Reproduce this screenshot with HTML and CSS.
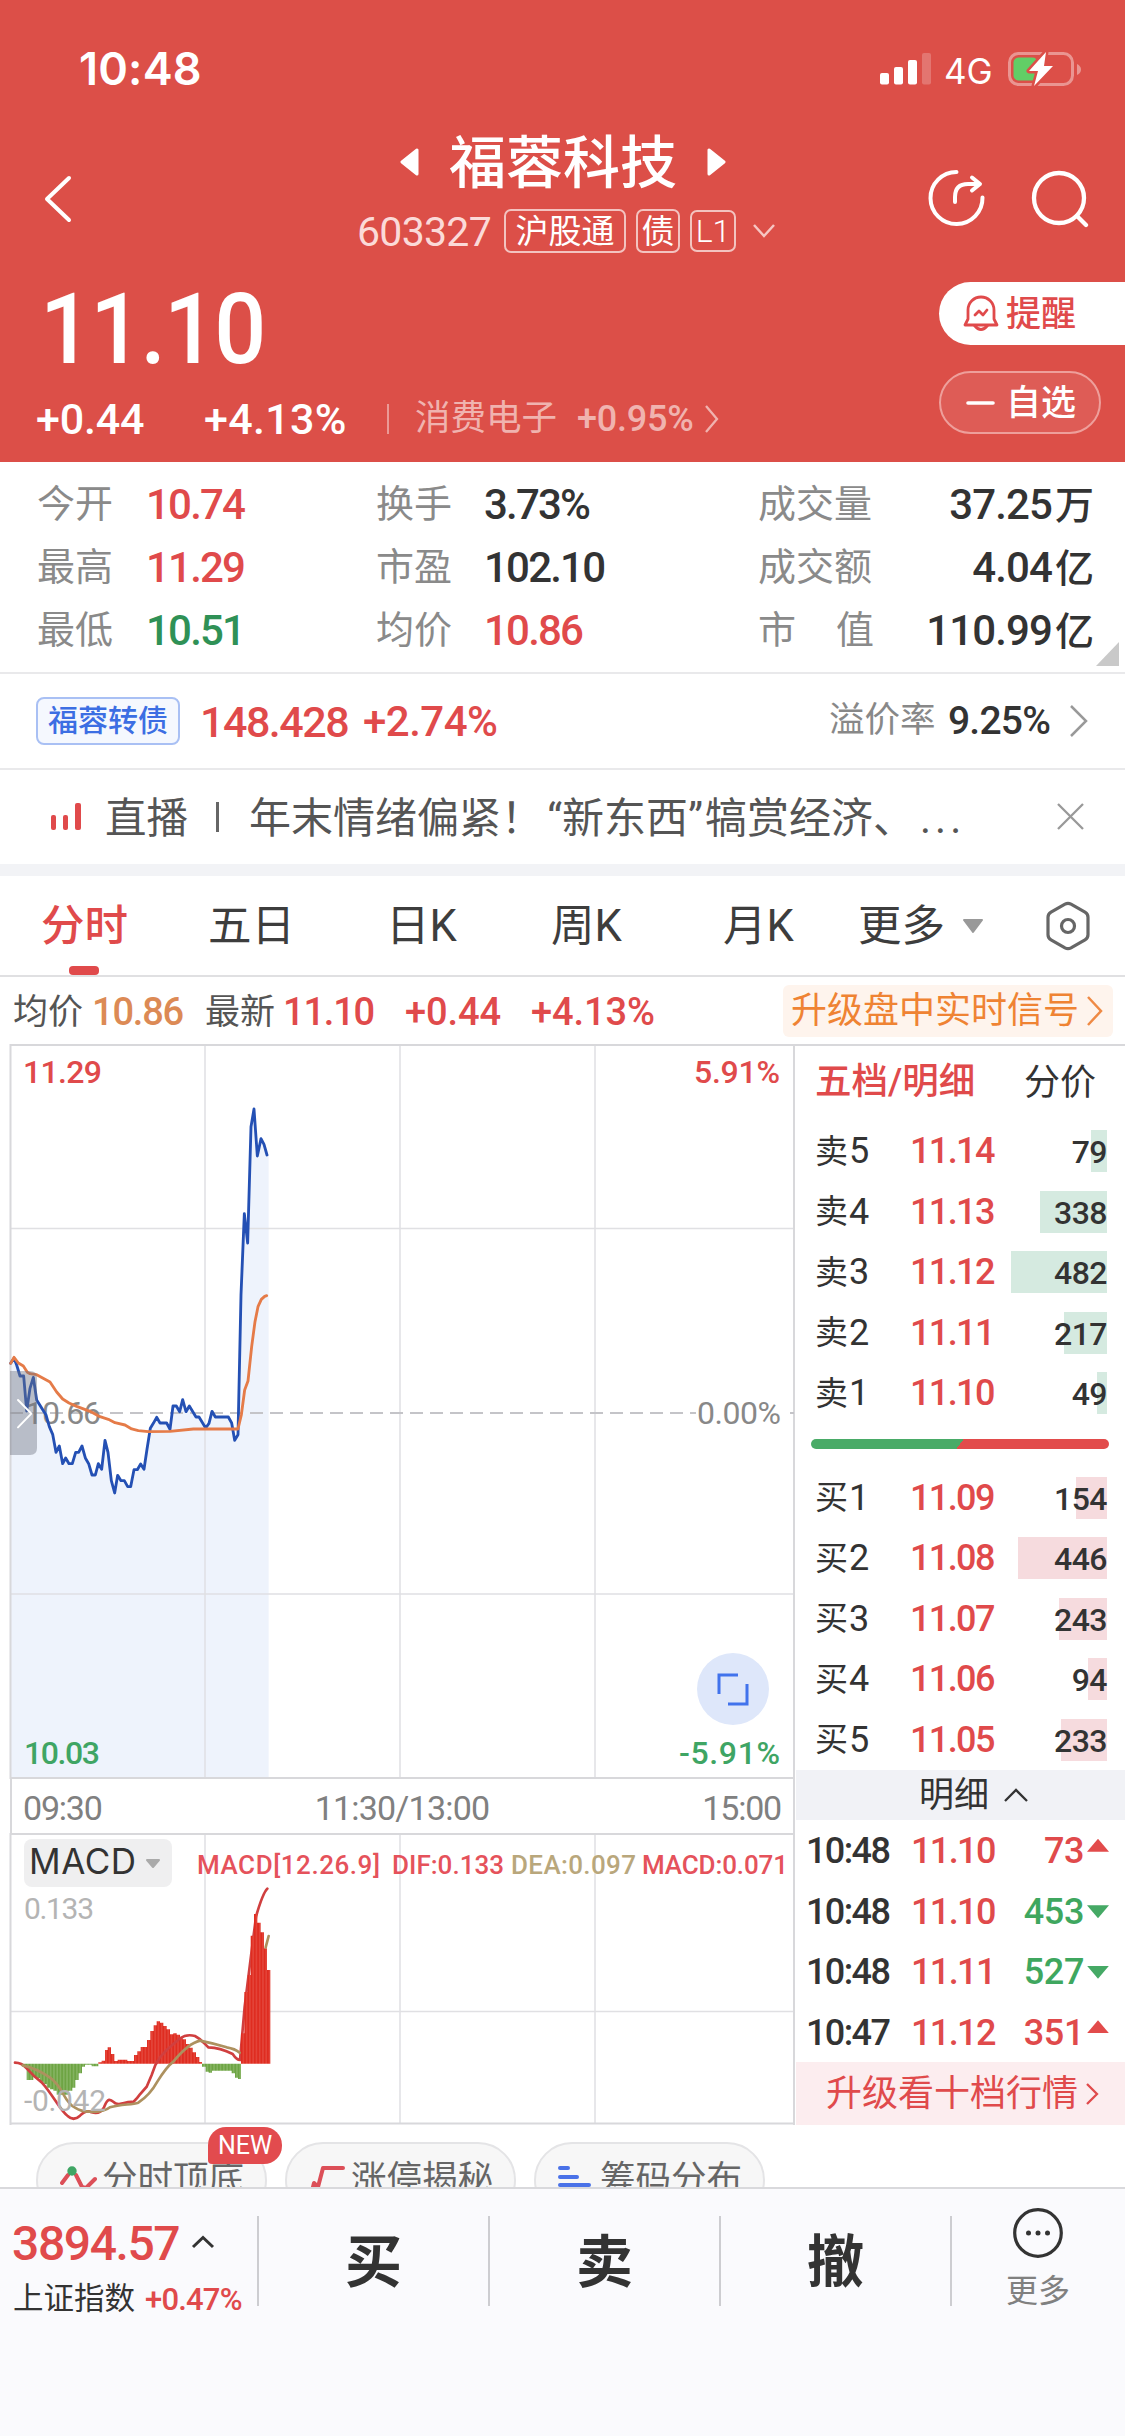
FILE: index.html
```html
<!DOCTYPE html>
<html lang="zh-CN">
<head>
<meta charset="utf-8">
<title>福蓉科技 603327</title>
<link rel="stylesheet" href="styles.css">
</head>
<body>
<div class="screen">
  <header class="header">
    <div class="status">
      <span class="clock">10:48</span>
      <div class="status-right">
        <svg class="signal" width="52" height="34" viewBox="0 0 52 34"><g fill="#fff"><rect x="0" y="21" width="9" height="11.500" rx="2"/><rect x="14" y="15" width="9" height="17.500" rx="2"/><rect x="28" y="8" width="9" height="24.500" rx="2"/><rect x="42" y="1" width="9" height="31.500" rx="2" opacity=".22"/></g></svg>
        <span class="net">4G</span>
        <svg class="battery" width="76" height="38" viewBox="0 0 76 38"><rect x="1.500" y="3.500" width="63" height="31" rx="9" fill="none" stroke="#fff" stroke-opacity=".4" stroke-width="3"/><path d="M69 14v11q4-2 4-5.500T69 14z" fill="#fff" opacity=".4"/><rect x="5.500" y="7.500" width="24" height="23" rx="5" fill="#62ce66"/><path d="M38 2L21 21h9l-4 15 19-20h-9z" fill="#fff" stroke="#dc4f48" stroke-width="5" stroke-linejoin="round" paint-order="stroke"/></svg>
      </div>
    </div>
    <div class="nav">
      <svg class="back" width="30" height="50" viewBox="0 0 30 50"><path d="M26 4L4 25l22 21" fill="none" stroke="#fff" stroke-width="4" stroke-linecap="round" stroke-linejoin="round"/></svg>
      <div class="nav-mid">
        <div class="title-row">
          <svg width="20" height="28" viewBox="0 0 20 28"><path d="M17 2v24L2 14z" fill="#fff" stroke="#fff" stroke-width="3" stroke-linejoin="round"/></svg>
          <h1>福蓉科技</h1>
          <svg width="20" height="28" viewBox="0 0 20 28"><path d="M3 2v24l15-12z" fill="#fff" stroke="#fff" stroke-width="3" stroke-linejoin="round"/></svg>
        </div>
        <div class="code-row">
          <span class="code">603327</span>
          <span class="tag tag-wide">沪股通</span>
          <span class="tag">债</span>
          <span class="tag tag-l1">L1</span>
          <svg class="code-arrow" width="24" height="18" viewBox="0 0 24 18"><path d="M2 3l10 11L22 3" fill="none" stroke="#f6c6c3" stroke-width="2.500"/></svg>
        </div>
      </div>
      <div class="nav-icons">
        <svg width="58" height="58" viewBox="0 0 58 58"><g fill="none" stroke="#fff" stroke-width="4" stroke-linecap="round" stroke-linejoin="round"><path d="M28.500 3A26 26 0 1 0 54.500 28.500"/><path d="M27 33V28Q27 15 40 15H50M44 8.500l8 6.500-8 6.500"/></g></svg>
        <svg width="58" height="60" viewBox="0 0 58 60"><g fill="none" stroke="#fff" stroke-width="4.300" stroke-linecap="round"><circle cx="28" cy="29" r="25"/><path d="M46 47l9 9"/></g></svg>
      </div>
    </div>
    <div class="quote">
      <div class="quote-left">
        <div class="price">11.10</div>
        <div class="change">
          <span class="chg">+0.44</span><span class="chg pct">+4.13%</span><i class="vbar"></i><span class="sector">消费电子</span><span class="sector-pct">+0.95%</span>
          <svg width="16" height="30" viewBox="0 0 16 30"><path d="M2 2l11 13L2 28" fill="none" stroke="#f0b3af" stroke-width="2.300"/></svg>
        </div>
      </div>
      <div class="quote-btns">
        <button class="btn-alert">
          <svg width="36" height="38" viewBox="0 0 36 38"><g fill="none" stroke="#e04a4b" stroke-width="2.800" stroke-linecap="round" stroke-linejoin="round"><path d="M5 24V15a13 13 0 0 1 26 0v9l3 6H2z"/><path d="M11.500 30.500q6.500 8 13 0"/><path d="M12 20l4-4 4 4 4-5"/></g></svg>
          <span>提醒</span>
        </button>
        <button class="btn-fav">
          <svg width="30" height="6" viewBox="0 0 30 6"><path d="M2 3h25" stroke="#fff" stroke-width="3.600" stroke-linecap="round"/></svg>
          <span>自选</span>
        </button>
      </div>
    </div>
  </header>

  <section class="stats">
    <span class="lb">今开</span><b class="red">10.74</b><span class="lb">换手</span><b>3.73%</b><span class="lb">成交量</span><b class="r">37.25<em>万</em></b>
    <span class="lb">最高</span><b class="red">11.29</b><span class="lb">市盈</span><b>102.10</b><span class="lb">成交额</span><b class="r">4.04<em>亿</em></b>
    <span class="lb">最低</span><b class="green">10.51</b><span class="lb">均价</span><b class="red">10.86</b><span class="lb spread"><i>市</i><i>值</i></span><b class="r">110.99<em>亿</em></b>
    <i class="corner"></i>
  </section>

  <section class="bond">
    <span class="bond-tag">福蓉转债</span><b class="red bond-price">148.428</b><b class="red bond-pct">+2.74%</b>
    <span class="prem">溢价率</span><b class="prem-v">9.25%</b>
    <svg width="20" height="36" viewBox="0 0 20 36"><path d="M2 3l15 15L2 33" fill="none" stroke="#999" stroke-width="2.500"/></svg>
  </section>

  <section class="live">
    <svg width="32" height="30" viewBox="0 0 32 30"><g fill="#e04a4b"><rect x="0" y="13" width="5" height="15" rx="2"/><rect x="12" y="13" width="5" height="15" rx="2"/><rect x="24" y="1" width="6" height="27" rx="2"/></g></svg>
    <span class="live-k">直播</span><i class="live-sep"></i>
    <span class="live-t">年末情绪偏紧！<q class="ql">“</q>新东西<q class="qr">”</q>犒赏经济、<q class="dots">...</q></span>
    <svg class="live-x" width="28" height="28" viewBox="0 0 28 28"><path d="M1 1l25 25M26 1L1 26" stroke="#999" stroke-width="2.300"/></svg>
  </section>

  <nav class="tabs">
    <span class="tab on">分时</span><span class="tab">五日</span><span class="tab">日K</span><span class="tab">周K</span><span class="tab">月K</span><span class="tab">更多</span>
    <svg class="tri" width="22" height="16" viewBox="0 0 22 16"><path d="M2 2h18l-9 12z" fill="#999" stroke="#999" stroke-width="2" stroke-linejoin="round"/></svg>
    <svg class="hex" width="46" height="50" viewBox="0 0 46 50"><g fill="none" stroke="#666" stroke-width="3.200"><path d="M20 3.200q3-1.600 6 0l14 8q3 1.800 3 5v17.600q0 3.200-3 5l-14 8q-3 1.600-6 0l-14-8q-3-1.800-3-5V16.200q0-3.200 3-5z"/><circle cx="23" cy="25" r="6.500"/></g></svg>
  </nav>

  <section class="info">
    <span class="k">均价</span><b class="orange">10.86</b><span class="k">最新</span><b class="red">11.10</b><b class="red wide">+0.44</b><b class="red wide">+4.13%</b>
    <span class="signal-ad"><span>升级盘中实时信号</span><svg width="18" height="32" viewBox="0 0 18 32"><path d="M2 2l13 14L2 30" fill="none" stroke="#ef8a45" stroke-width="2.500"/></svg></span>
  </section>

  <main class="board">
    <div class="charts">
      <svg class="chart" width="795" height="735" viewBox="0 0 795 735">
        <path transform="translate(0 -4) scale(.33333)" fill="#eef3fc" d="M30 970L42 955 50 975 60 1008H71L80 1113 90 1045 100 1012 110 1080 138 1125 148 1160 158 1183 168 1237 178 1218 188 1271 197 1254 207 1271H217L227 1237H236L246 1218 256 1254 266 1271 276 1305H286L295 1271 305 1288 315 1201 324 1237 334 1322 344 1359 353 1306 363 1322H373L383 1340H392L402 1289H412L422 1272 432 1288 441 1228 451 1165 460 1150 470 1132 480 1149H500L510 1168 519 1098H529L539 1115 548 1079 558 1115 568 1098 588 1131H597L617 1164 627 1150 636 1114 646 1131H685L695 1149 704 1201 714 1184 723 765 733 521 743 609 753 260 762 207 772 348 783 296 792 313 801 345H806V2214H30z"/>
        <g stroke="#e0e0e3" stroke-width="1.500" fill="none"><path d="M205 0V734M400 0V734M595 0V734M10 184.500H794M10 550H794"/></g>
        <path d="M10 1H795M10.500 0V735M794 0V735M10 734H795" stroke="#d8d8db" stroke-width="2" fill="none"/>
        <path d="M10 369H794" stroke="#c4c4c8" stroke-width="1.800" stroke-dasharray="13 7"/>
        <text x="25" y="380" class="mut" textLength="76">10.66</text>
        <rect x="696" y="358" width="88" height="24" fill="#fff"/>
        <text x="697" y="380" class="mut" textLength="84">0.00%</text>
        <g transform="translate(0 -4) scale(.33333)" fill="none" stroke-linejoin="round" stroke-linecap="round" stroke-width="8.500">
          <path stroke="#2450b4" d="M32 970L42 955 50 975 60 1008H71L80 1113 90 1045 100 1012 110 1080 138 1125 148 1160 158 1183 168 1237 178 1218 188 1271 197 1254 207 1271H217L227 1237H236L246 1218 256 1254 266 1271 276 1305H286L295 1271 305 1288 315 1201 324 1237 334 1322 344 1359 353 1306 363 1322H373L383 1340H392L402 1289H412L422 1272 432 1288 441 1228 451 1165 460 1150 470 1132 480 1149H500L510 1168 519 1098H529L539 1115 548 1079 558 1115 568 1098 588 1131H597L617 1164 627 1150 636 1114 646 1131H685L695 1149 704 1201 714 1184 723 765 733 521 743 609 753 260 762 207 772 348 783 296 792 313 801 345"/>
          <path stroke="#e57b48" d="M32 970L42 952 55 969 70 978 82 997 90 1001 110 1004 128 1014 150 1026 170 1056 188 1077 207 1089 230 1099 270 1114 300 1130 325 1138 345 1148 375 1155 395 1167 415 1172 445 1175 510 1174 580 1167H714L724 1125 734 1050 744 1023 755 920 765 845 774 800 784 778 794 769 800 767"/>
          <path d="M30 993H90Q111 993 111 1014V1224Q111 1245 90 1245H30z" fill="#6e7380" fill-opacity=".42" stroke="none"/>
          <path d="M54 1080L94 1121 54 1162" stroke="#fff" stroke-width="6"/>
        </g>
        <text x="23" y="39" class="c-red" textLength="79">11.29</text>
        <text x="694" y="39" class="c-red" textLength="86">5.91%</text>
        <text x="24" y="720" class="c-green" textLength="76">10.03</text>
        <text x="679" y="720" class="c-green" textLength="101">-5.91%</text>
        <circle cx="733" cy="645" r="36" fill="#dee7fa"/>
        <path d="M719 650V631H738M747 640V660H728" fill="none" stroke="#4173ec" stroke-width="3"/>
      </svg>
      <div class="axis"><span>09:30</span><span>11:30/13:00</span><span>15:00</span></div>
      <svg class="chart" width="795" height="292" viewBox="0 0 795 292">
        <defs>
          <pattern id="pr" width="9.800" height="20" patternUnits="userSpaceOnUse"><rect width="9.800" height="20" fill="#df2c20"/><rect x="4" width="1.800" height="20" fill="#ea6a60"/></pattern>
          <pattern id="pg" width="9.800" height="20" patternUnits="userSpaceOnUse"><rect width="9.800" height="20" fill="#6da443"/><rect x="4" width="2" height="20" fill="#a4c888"/></pattern>
        </defs>
        <g stroke="#e0e0e3" stroke-width="1.500"><path d="M205 0V291M400 0V291M595 0V291M10 178.500H794"/></g>
        <path d="M10 1H795M10.500 0V292M794 0V292M10 290.500H795" stroke="#d8d8db" stroke-width="2" fill="none"/>
        <text x="24" y="86" class="m-lab" textLength="70">0.133</text>
        <g transform="translate(0 -13) scale(.33333)">
          <path fill="url(#pg)" d="M62 731V735H72V742H80V780H100V770H110V775H120V785H130V792H140V803H150V808H160V812H170V824H205V812H217V803H226V780H236V760H246V740H255V734H275V739H295V731z"/>
          <path fill="url(#pr)" d="M295 731V727H305V722H315V690H323V682H333V702H343V723H353V719H382V723H402V705H412V694H422V681H441V660H451V633H461V616H470V604H480V608H490V618H500V628H510V643H520V640H530V644H540V652H548V658H558V672H568V683H578V697H588V711H598V726H606V731z"/>
          <path fill="url(#pg)" d="M606 731V740H617V755H626V758H636V752H695V760H705V773H714V777H723V731z"/>
          <g fill="none" stroke-width="8" stroke-linecap="round">
            <path stroke="#d03f3f" d="M45 728Q65 728 80 745Q100 768 125 787C160 825 180 872 203 888Q221 905 240 887Q258 868 275 877 Q300 884 312 862C325 828 333 840 346 850C365 858 375 843 400 846Q412 835 420 823L440 800 455 765 466 735 480 712 500 690 540 655Q560 641 585 648C605 658 612 670 625 682Q660 683 698 702Q710 720 720 720L734 560 754 400 768 290Q788 220 802 206"/>
          </g>
          <path fill="url(#pr)" d="M723 731V640H733V516H743V465H752V347H762V282H772V308H782V337H792V385H801V450H811V731z"/>
          <g fill="none" stroke-width="8" stroke-linecap="round"><path stroke="#ad915f" d="M68 736Q110 745 150 773C190 800 190 845 225 863Q245 876 270 875Q310 878 330 862C365 852 395 855 415 848Q450 825 472 785Q500 740 520 725Q565 670 600 662Q640 670 680 682 Q705 686 719 698M797 382L806 348"/></g>
        </g>
        <text x="24" y="278" class="m-lab" textLength="82">-0.042</text>
        <rect x="24" y="6" width="148" height="48" rx="8" fill="#efeff0"/>
        <text x="29" y="41" class="m-name" textLength="107">MACD</text>
        <path d="M147 27h12l-6 7z" fill="#aaa" stroke="#aaa" stroke-width="2" stroke-linejoin="round"/>
        <text x="197" y="41" class="m-val c1" textLength="183">MACD[12.26.9]</text>
        <text x="392" y="41" class="m-val c1" textLength="112">DIF:0.133</text>
        <text x="511" y="41" class="m-val c2" textLength="125">DEA:0.097</text>
        <text x="642" y="41" class="m-val c1" textLength="146">MACD:0.071</text>
      </svg>
    </div>

    <aside class="book">
      <div class="book-head"><b>五档/明细</b><span>分价</span></div>
      <div class="lv"><span>卖<i>5</i></span><b>11.14</b><em><u class="g" style="width:16px"></u>79</em></div>
      <div class="lv"><span>卖<i>4</i></span><b>11.13</b><em><u class="g" style="width:67px"></u>338</em></div>
      <div class="lv"><span>卖<i>3</i></span><b>11.12</b><em><u class="g" style="width:96px"></u>482</em></div>
      <div class="lv"><span>卖<i>2</i></span><b>11.11</b><em><u class="g" style="width:43px"></u>217</em></div>
      <div class="lv"><span>卖<i>1</i></span><b>11.10</b><em><u class="g" style="width:10px"></u>49</em></div>
      <div class="ratio"></div>
      <div class="lv"><span>买<i>1</i></span><b>11.09</b><em><u class="p" style="width:31px"></u>154</em></div>
      <div class="lv"><span>买<i>2</i></span><b>11.08</b><em><u class="p" style="width:89px"></u>446</em></div>
      <div class="lv"><span>买<i>3</i></span><b>11.07</b><em><u class="p" style="width:48px"></u>243</em></div>
      <div class="lv"><span>买<i>4</i></span><b>11.06</b><em><u class="p" style="width:19px"></u>94</em></div>
      <div class="lv"><span>买<i>5</i></span><b>11.05</b><em><u class="p" style="width:46px"></u>233</em></div>
      <div class="detail"><span>明细</span><svg width="26" height="16" viewBox="0 0 26 16"><path d="M2 14L13 3l11 11" fill="none" stroke="#333" stroke-width="2.300"/></svg></div>
      <div class="tick"><span>10:48</span><b>11.10</b><em class="red">73</em><i class="up"></i></div>
      <div class="tick"><span>10:48</span><b>11.10</b><em class="grn">453</em><i class="dn"></i></div>
      <div class="tick"><span>10:48</span><b>11.11</b><em class="grn">527</em><i class="dn"></i></div>
      <div class="tick"><span>10:47</span><b>11.12</b><em class="red">351</em><i class="up"></i></div>
      <div class="upsell"><span>升级看十档行情</span><svg width="15" height="24" viewBox="0 0 15 24"><path d="M2 2l10 10L2 22" fill="none" stroke="#e04a4b" stroke-width="2.300"/></svg></div>
    </aside>
  </main>

  <div class="chips">
    <div class="chip"><svg width="38" height="36" viewBox="0 0 38 36"><g fill="none" stroke="#dc4f58" stroke-width="4" stroke-linecap="round"><path d="M3 18l6-8M17 10l6 12 4 1 9-9"/></g><circle cx="13" cy="6" r="4.700" fill="#3fa564"/></svg><span>分时顶底</span><i class="new">NEW</i></div>
    <div class="chip"><svg width="38" height="36" viewBox="0 0 38 36"><path d="M4 26l2-8 4 4 5-19h20" fill="none" stroke="#dc4f58" stroke-width="4" stroke-linejoin="round" stroke-linecap="round"/></svg><span>涨停揭秘</span></div>
    <div class="chip"><svg width="38" height="36" viewBox="0 0 38 36"><path d="M3 3h8M3 12h17M3 20h29" fill="none" stroke="#4a72e8" stroke-width="4" stroke-linecap="round"/></svg><span>筹码分布</span></div>
  </div>

  <footer class="bar">
    <div class="index">
      <div class="idx-top"><b>3894.57</b><svg width="24" height="14" viewBox="0 0 24 14"><path d="M2 12L12 2.500 22 12" fill="none" stroke="#333" stroke-width="3"/></svg></div>
      <div class="idx-bot"><span>上证指数</span><b>+0.47%</b></div>
    </div>
    <div class="act">买</div><div class="act">卖</div><div class="act">撤</div>
    <div class="more"><svg width="50" height="50" viewBox="0 0 50 50"><circle cx="25" cy="25" r="23.300" fill="none" stroke="#333" stroke-width="3.200"/><g fill="#333"><circle cx="15.500" cy="25" r="2.500"/><circle cx="25" cy="25" r="2.500"/><circle cx="34.500" cy="25" r="2.500"/></g></svg><span>更多</span></div>
  </footer>
</div>
</body>
</html>
```

FILE: styles.css
```css
* { box-sizing: border-box; }
body {
  margin: 0;
  width: 1125px;
  background: #fff;
  color: #333;
  font-family: Roboto, "Noto Sans CJK SC", sans-serif;
  font-size: 36px;
  line-height: 1;
}
i, em, u { font-style: normal; text-decoration: none; }
b { font-weight: 500; }
h1 { margin: 0; }
svg { display: block; flex: none; }
span, b, em { white-space: nowrap; }
.screen { width: 1125px; height: 2436px; overflow: hidden; display: flex; flex-direction: column; }
.screen > * { flex: none; }
.red { color: #e04a4b; }
.green { color: #2f9156; }
.grn { color: #3fa75f; }

/* header */
.header { height: 462px; background: #dc4f48; color: #fff; }
.status { height: 132px; padding: 6px 41px 0 79px; display: flex; justify-content: space-between; align-items: center; }
.clock { font: 600 45px/60px Inter, sans-serif; letter-spacing: .2px; }
.status-right { display: flex; align-items: center; height: 60px; }
.net { font: 400 35px/40px Inter, sans-serif; margin-left: 12px; width: 64px; padding-top: 3px; }
.nav { height: 130px; display: grid; grid-template-columns: 330px 1fr 196px; align-items: center; }
.back { margin-left: 43px; margin-top: 4px; }
.nav-mid { display: flex; flex-direction: column; gap: 8px; }
.title-row { height: 60px; display: flex; align-items: center; padding-left: 70px; }
.title-row h1 { font-size: 57px; line-height: 60px; font-weight: 500; margin: 0 29px; padding-top: 3px; }
.code-row { height: 62px; display: flex; align-items: center; padding-left: 27px; }
.code { font-size: 41px; width: 147px; color: #fbdad8; letter-spacing: -.7px; padding-top: 3px; }
.tag { height: 44px; line-height: 42px; width: 44px; border: 2px solid #f3c3c0; border-radius: 7px; font-size: 33px; text-align: center; margin-right: 10px; color: #fff; }
.tag-wide { width: 122px; }
.tag-l1 { width: 46px; font-size: 32px; font-weight: 300; height: 42px; line-height: 39px; }
.code-arrow { margin-left: 6px; }
.nav-icons { display: flex; gap: 45px; padding-top: 4px; margin-left: -1px; }
.quote { height: 200px; display: flex; justify-content: space-between; }
.quote-left { padding-top: 18px; }
.price { font-size: 98px; line-height: 100px; font-weight: 500; margin-left: 40px; width: 240px; letter-spacing: -2px; transform: scaleX(.935); transform-origin: 0 50%; }
.change { height: 78px; display: flex; align-items: center; padding-left: 36px; }
.chg { font-size: 43px; font-weight: 500; width: 168px; letter-spacing: -.2px; }
.chg.pct { width: 183px; letter-spacing: .3px; }
.vbar { width: 2px; height: 30px; background: #eb9a96; margin-right: 26px; }
.sector { font-size: 35.500px; color: #f0b3af; width: 162px; }
.sector-pct { font-size: 36px; font-weight: 500; color: #f0b3af; width: 127px; letter-spacing: -.2px; }
.quote-btns { width: 186px; padding-top: 20px; display: flex; flex-direction: column; gap: 26px; }
button { font-family: inherit; border: 0; margin: 0; display: flex; align-items: center; height: 63px; font-size: 35px; line-height: 50px; font-weight: 500; }
button span { padding-top: 2px; }
.btn-alert { width: 186px; border-radius: 32px 0 0 32px; background: #fff; color: #e04a4b; padding: 0 0 0 24px; gap: 7px; }
.btn-fav { width: 162px; border-radius: 32px; background: rgba(255,255,255,.08); border: 2px solid #ee9f9b; color: #fff; padding: 0 0 0 25px; gap: 10px; }

/* statistics */
.stats { position: relative; height: 212px; border-bottom: 2px solid #e9e9eb; padding: 9px 31px 0 37px; display: grid; grid-template-columns: 109px 230px 108px 274px 116px 1fr; grid-auto-rows: 63px; align-items: center; background: #fff; }
.lb { color: #8a8a8a; font-size: 38px; }
.stats .lb { padding-top: 2px; }
.stats b { font-size: 42px; letter-spacing: -1.800px; padding-top: 5px; }
.stats b em { font-size: 39px; letter-spacing: 0; margin-left: 3px; }
.stats .r { text-align: right; letter-spacing: -.9px; }
.spread { display: flex; justify-content: space-between; }
.corner { position: absolute; right: 6px; bottom: 6px; width: 23px; height: 24px; background: #c9c9c9; clip-path: polygon(100% 0, 100% 100%, 0 100%); }

/* convertible bond */
.bond { height: 96px; border-bottom: 2px solid #e9e9eb; display: flex; align-items: center; padding: 0 36px; }
.bond-tag { height: 48px; width: 144px; border: 2px solid #a9c0f4; border-radius: 8px; background: #f5f8fe; color: #3c6ee3; font-size: 30px; font-weight: 500; line-height: 44px; text-align: center; margin-right: 20px; }
.bond b { font-size: 42px; letter-spacing: -.5px; padding-top: 2px; }
.bond .bond-price { width: 163px; letter-spacing: -1.500px; font-size: 43px; }
.bond-pct { flex: 1; }
.prem { color: #888; font-size: 35.500px; width: 119px; }
.bond .prem-v { font-size: 39px; width: 121px; letter-spacing: -.8px; padding-top: 0; }

/* live news */
.live { height: 106px; border-bottom: 12px solid #f2f3f6; display: flex; align-items: center; padding: 0 40px 0 51px; color: #555; font-size: 42px; }
.live-k { margin-left: 22px; width: 111px; font-size: 41.500px; padding-top: 3px; }
.live-sep { width: 3px; height: 30px; background: #666; margin-right: 30px; }
.live-t { flex: 1; padding-top: 3px; }
.live q { quotes: none; }
.live q::before, .live q::after { content: none; }
.ql, .qr { display: inline-block; width: 24px; }
.ql { text-align: right; margin-left: -5px; }
.live .qr { width: 17px; }
.live .dots { letter-spacing: 4px; margin-left: 5px; }

/* period tabs */
.tabs { height: 101px; border-bottom: 2px solid #e0e0e2; display: grid; grid-template-columns: 167px 178px 165px 172px 135px 104px 83px 1fr; align-items: center; padding-left: 41px; font-size: 43.500px; background: #fff; color: #3d3d3d; }
.tab { position: relative; line-height: 102px; height: 99px; }
.tab.on { color: #e04a4b; font-weight: 500; }
.tab.on::after { content: ""; position: absolute; left: 28px; bottom: 0; width: 30px; height: 9px; border-radius: 4px; background: #e04a4b; }

/* info line */
.info { height: 67px; display: grid; grid-template-columns: 79px 113px 78px 122px 126px 252px 330px; align-items: center; padding-left: 13px; font-size: 35px; padding-top: 1px; }
.info .k { color: #555; padding-top: 2px; }
.info b { font-size: 38px; letter-spacing: -1.200px; padding-top: 2px; }
.info .wide { letter-spacing: -.1px; }
.orange { color: #dc8a55; }
.signal-ad { height: 52px; background: #fef4ed; border-radius: 6px; color: #ef8333; font-size: 36px; display: flex; align-items: center; padding-left: 8px; gap: 7px; }

/* board */
.board { height: 1081px; display: flex; }
.charts { width: 795px; }
.chart text { font-family: Roboto, sans-serif; font-size: 32px; font-weight: 500; }
.chart .mut { fill: #888; font-weight: 400; }
.chart .c-red { fill: #e04a4b; }
.chart .c-green { fill: #3fa564; }
.chart .m-lab { font-size: 30px; fill: #b4b4b4; font-weight: 400; }
.chart .m-name { font-family: Inter, sans-serif; font-size: 35px; font-weight: 400; fill: #333; }
.chart .m-val { font-size: 26px; }
.chart .c1 { fill: #e5525b; }
.chart .c2 { fill: #b9a77c; }
.axis { height: 54px; margin-left: 10px; border: solid #d8d8db; border-width: 0 2px; display: flex; justify-content: space-between; align-items: center; padding: 4px 12px 0 11px; color: #808080; font-size: 34px; letter-spacing: -1.200px; }
.axis span:nth-child(2) { letter-spacing: -.8px; }

/* order book */
.book { width: 330px; border-top: 2px solid #d8d8db; background: #fff; }
.book-head { height: 75px; padding: 0 29px 2px 20px; display: flex; align-items: center; justify-content: space-between; font-size: 36px; }
.book-head b { color: #e04a4b; font-size: 36.500px; }
.lv { height: 60.500px; display: grid; grid-template-columns: 95px 100px 1fr; align-items: center; padding: 0 18px 0 20px; }
.lv span { font-size: 33px; display: flex; align-items: center; }
.lv span i { font-size: 36px; margin-left: 1px; }
.lv b, .tick b { font-size: 36px; color: #e04a4b; letter-spacing: -1.600px; }
.lv em { position: relative; z-index: 0; height: 42px; line-height: 44px; font-size: 32px; font-weight: 500; text-align: right; letter-spacing: -.5px; }
.lv u { position: absolute; z-index: -1; right: 0; top: 0; height: 42px; }
.g { background: #d5eae0; }
.p { background: #f6dbde; }
.ratio { height: 10px; margin: 15px 16px 19px 16px; border-radius: 5px; background: linear-gradient(126deg, #49ab67 50%, #e24b4b 50%); }
.detail { height: 50px; background: #f1f2f6; display: flex; align-items: center; gap: 14px; font-size: 35px; padding-left: 123px; margin-left: 1px; }
.tick { height: 60.500px; display: grid; grid-template-columns: 105px 96px 77px 22px; align-items: center; padding: 2px 0 0 11px; font-size: 36px; font-weight: 500; }
.tick span { letter-spacing: -1.600px; }
.tick em { text-align: right; letter-spacing: -.4px; }
.tick i { width: 22px; height: 13px; margin-left: 3px; margin-top: -12px; }
.up { background: #e24b4b; clip-path: polygon(50% 0, 100% 100%, 0 100%); }
.dn { background: #45a965; clip-path: polygon(0 0, 100% 0, 50% 100%); }
.tick i.dn { margin-top: 0; }
.upsell { height: 63px; margin-left: 1px; background: #fcedef; color: #e04a4b; display: flex; align-items: center; gap: 7px; padding-left: 30px; font-size: 36px; }

/* tool chips */
.chips { height: 62px; overflow: hidden; display: flex; gap: 18px; padding: 17px 36px 0; align-items: flex-start; background: #fff; }
.chip { position: relative; flex: none; width: 231px; height: 76px; border: 2px solid #e4e4e6; border-radius: 38px; background: #f7f7f7; display: flex; align-items: center; padding-left: 21px; color: #666; font-size: 35.500px; }
.chip svg { margin-top: 6px; margin-right: 5px; }
.new { position: absolute; left: 170px; top: -17px; width: 74px; height: 37px; line-height: 37px; border-radius: 18px 18px 18px 4px; background: #e24b4e; color: #fff; font-size: 25px; text-align: center; }

/* bottom bar */
.bar { height: 249px; background: #fafafd; border-top: 2px solid #d9d9dc; display: flex; align-items: flex-start; }
.index { width: 257px; padding-left: 12px; padding-top: 27px; }
.idx-top { height: 56px; display: flex; align-items: center; gap: 11px; color: #e04a4b; font-size: 48px; }
.idx-top b { width: 168px; letter-spacing: -1.400px; }
.idx-top svg { margin-top: -4px; }
.idx-bot { height: 54px; display: flex; align-items: center; font-size: 30.500px; }
.idx-bot span { width: 133px; padding-left: 1px; }
.idx-bot b { font-size: 31px; letter-spacing: -.8px; color: #e04a4b; }
.act { width: 231px; height: 90px; margin-top: 27px; border-left: 2px solid #cdcdd1; font-size: 57px; font-weight: 700; line-height: 94px; text-align: center; }
.more { width: 174px; border-left: 2px solid #cdcdd1; height: 90px; margin-top: 27px; display: flex; flex-direction: column; align-items: center; }
.more svg { margin-top: -8px; }
.more span { font-size: 32px; color: #808080; margin-top: 17px; }
```
